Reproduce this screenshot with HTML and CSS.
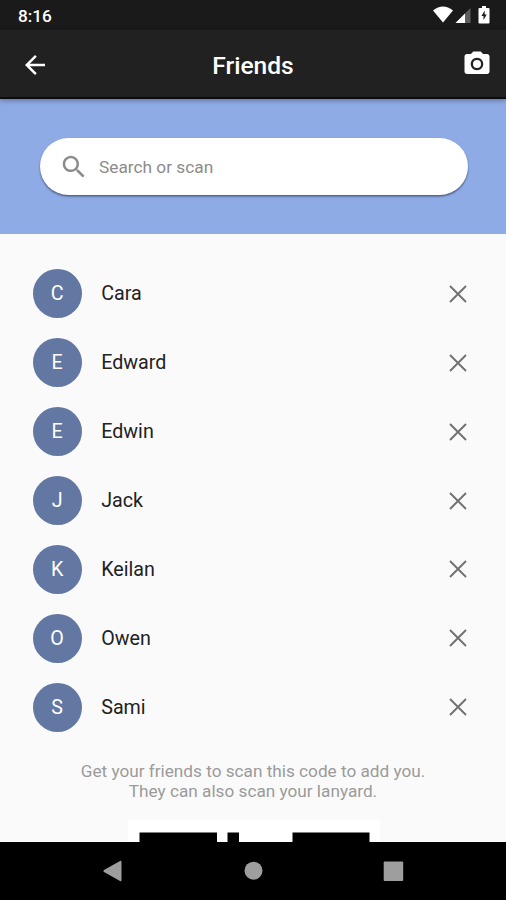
FILE: index.html
```html
<!DOCTYPE html>
<html lang="en">
<head>
<meta charset="utf-8">
<title>Friends</title>
<link rel="stylesheet" href="styles.css">
</head>
<body>
<div class="screen">
  <div class="status">
    <span class="time">8:16</span>
    <svg class="status-icons" width="60" height="30" viewBox="0 0 60 30">
      <path d="M3 10.500Q13 2.500 23 10.500L13 22.500Z" fill="#fff"/>
      <path d="M40.500 8V23H25.500Z" fill="#5c5c5c"/>
      <path d="M35 13.500V23H25.500Z" fill="#fff"/>
      <path d="M52 6h4v2h2.500q1 0 1 1v13.500q0 1-1 1h-9q-1 0-1-1V9q0-1 1-1H52Z" fill="#fff"/>
      <path d="M54.700 10.500L51.500 16h2v4l3.200-5.500h-2Z" fill="#1a1a1a"/>
    </svg>
  </div>
  <header class="appbar">
    <svg class="back" width="30" height="30" viewBox="0 0 24 24"><path d="M20 11H7.830l5.590-5.590L12 4l-8 8 8 8 1.410-1.410L7.830 13H20v-2z"/></svg>
    <h1>Friends</h1>
    <svg class="camera" width="30" height="30" viewBox="0 0 24 24"><circle cx="12" cy="12" r="3.200"/><path d="M9 2L7.170 4H4c-1.100 0-2 .9-2 2v12c0 1.100.9 2 2 2h16c1.100 0 2-.9 2-2V6c0-1.100-.9-2-2-2h-3.170L15 2H9zm3 15c-2.760 0-5-2.240-5-5s2.240-5 5-5 5 2.240 5 5-2.240 5-5 5z"/></svg>
  </header>
  <section class="search-area">
    <div class="search">
      <svg width="30" height="30" viewBox="0 0 24 24"><path d="M15.500 14h-.79l-.28-.27C15.410 12.590 16 11.110 16 9.500 16 5.910 13.090 3 9.500 3S3 5.910 3 9.500 5.910 16 9.500 16c1.610 0 3.090-.59 4.230-1.570l.27.28v.79l5 4.990L20.490 19l-4.990-5zm-6 0C7.010 14 5 11.990 5 9.500S7.010 5 9.500 5 14 7.010 14 9.500 11.990 14 9.500 14z"/></svg>
      <span>Search or scan</span>
    </div>
  </section>
  <main class="content">
    <ul class="friends">
      <li><span class="avatar">C</span><span class="name">Cara</span><svg class="remove" viewBox="0 0 18 18"><path d="M1 1L17 17M17 1L1 17"/></svg></li>
      <li><span class="avatar">E</span><span class="name">Edward</span><svg class="remove" viewBox="0 0 18 18"><path d="M1 1L17 17M17 1L1 17"/></svg></li>
      <li><span class="avatar">E</span><span class="name">Edwin</span><svg class="remove" viewBox="0 0 18 18"><path d="M1 1L17 17M17 1L1 17"/></svg></li>
      <li><span class="avatar">J</span><span class="name">Jack</span><svg class="remove" viewBox="0 0 18 18"><path d="M1 1L17 17M17 1L1 17"/></svg></li>
      <li><span class="avatar">K</span><span class="name">Keilan</span><svg class="remove" viewBox="0 0 18 18"><path d="M1 1L17 17M17 1L1 17"/></svg></li>
      <li><span class="avatar">O</span><span class="name">Owen</span><svg class="remove" viewBox="0 0 18 18"><path d="M1 1L17 17M17 1L1 17"/></svg></li>
      <li><span class="avatar">S</span><span class="name">Sami</span><svg class="remove" viewBox="0 0 18 18"><path d="M1 1L17 17M17 1L1 17"/></svg></li>
    </ul>
    <p class="hint">Get your friends to scan this code to add you.<br>They can also scan your lanyard.</p>
    <svg class="code" width="252" height="22" viewBox="0 0 252 22"><path d="M0 0H252V22H0Z" fill="#fff"/><path d="M11.500 12.500H89V22H11.500ZM99.500 12.500H111V22H99.500ZM164.500 12.500H241.500V22H164.500Z"/></svg>
  </main>
  <nav class="navbar">
    <svg width="506" height="58" viewBox="0 0 506 58"><path d="M121.500 20V38Q121.500 40 120 39L104 30Q102.500 29 104 28L120 19Q121.500 18 121.500 20Z"/><circle cx="253.500" cy="28.700" r="9"/><rect x="383.700" y="19.500" width="19.500" height="19.500" rx="1"/></svg>
  </nav>
</div>
</body>
</html>
```
FILE: styles.css
```css
* { box-sizing: border-box; }
body { margin: 0; font-family: Roboto, "Liberation Sans", sans-serif; }
.screen {
  width: 506px;
  height: 900px;
  display: flex;
  flex-direction: column;
  overflow: hidden;
  background: #fafafa;
}
.status {
  height: 30px;
  flex: none;
  padding: 0 16px 0 18px;
  display: flex;
  justify-content: space-between;
  align-items: center;
  background: #1a1a1a;
  color: #fff;
}
.time { font-size: 17.200px; font-weight: 500; padding-top: 2px; }
.appbar {
  height: 69px;
  flex: none;
  padding: 2px 14px 0 20px;
  display: grid;
  grid-template-columns: 30px 1fr 30px;
  align-items: center;
  background: #212121;
  border-bottom: 2px solid #0b0b12;
  box-shadow: 0 1px 5px rgba(0, 0, 0, .4);
  z-index: 1;
}
.appbar svg { fill: #fff; }
.camera { margin-top: -2px; }
h1 {
  margin: 2px 6px 0 0;
  color: #fff;
  font-size: 24.600px;
  font-weight: 500;
  text-align: center;
}
.search-area {
  height: 135px;
  flex: none;
  padding: 39px 38.500px 0 39.500px;
  background: #8fabe5;
}
.search {
  height: 57px;
  padding-left: 19.500px;
  display: flex;
  align-items: center;
  gap: 10px;
  border-radius: 29px;
  background: #fff;
  box-shadow: 0 1.500px 2px rgba(20, 30, 60, .55);
  color: #8c8c8c;
  font-size: 17.300px;
}
.search svg { fill: #8c8c8c; }
.content {
  flex: 1;
  min-height: 0;
  overflow: hidden;
  padding-top: 25px;
  display: flex;
  flex-direction: column;
  align-items: center;
}
.friends {
  align-self: stretch;
  margin: 0;
  padding: .4px 39.500px 0 32.500px;
  list-style: none;
}
.friends li {
  height: 68.900px;
  display: flex;
  align-items: center;
}
.avatar {
  width: 49.200px;
  height: 49.200px;
  display: flex;
  justify-content: center;
  align-items: center;
  border-radius: 50%;
  background: #6377a3;
  color: #fff;
  font-size: 19.700px;
}
.name {
  flex: 1;
  margin-left: 19.500px;
  color: #222;
  font-size: 19.700px;
}
.remove {
  width: 18px;
  height: 18px;
  fill: none;
  stroke: #707070;
  stroke-width: 1.900;
}
.hint {
  margin: 20.500px 0 0;
  color: #9b9b9b;
  font-size: 17.200px;
  line-height: 19.700px;
  text-align: center;
}
.code { flex: none; margin: 18px 0 0 2px; }
.navbar {
  height: 58px;
  flex: none;
  background: #000;
}
.navbar svg { display: block; fill: #9e9e9e; }
```
